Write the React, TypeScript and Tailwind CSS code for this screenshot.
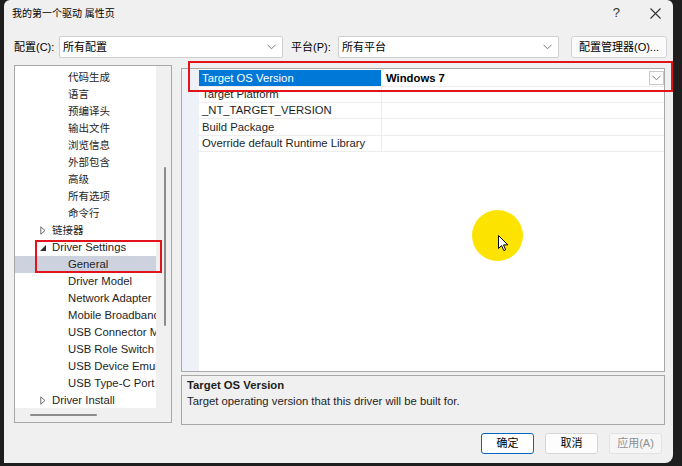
const FONT = { fontFamily: '"Liberation Sans", "Noto Sans CJK SC", sans-serif' };

type TreeItem = { label: string; level: 1 | 2; arrow?: 'closed' | 'open'; selected?: boolean };

const treeItems: TreeItem[] = [
  { label: '代码生成', level: 2 },
  { label: '语言', level: 2 },
  { label: '预编译头', level: 2 },
  { label: '输出文件', level: 2 },
  { label: '浏览信息', level: 2 },
  { label: '外部包含', level: 2 },
  { label: '高级', level: 2 },
  { label: '所有选项', level: 2 },
  { label: '命令行', level: 2 },
  { label: '链接器', level: 1, arrow: 'closed' },
  { label: 'Driver Settings', level: 1, arrow: 'open' },
  { label: 'General', level: 2, selected: true },
  { label: 'Driver Model', level: 2 },
  { label: 'Network Adapter', level: 2 },
  { label: 'Mobile Broadband', level: 2 },
  { label: 'USB Connector Manager', level: 2 },
  { label: 'USB Role Switch Driver', level: 2 },
  { label: 'USB Device Emulation', level: 2 },
  { label: 'USB Type-C Port Controller', level: 2 },
  { label: 'Driver Install', level: 1, arrow: 'closed' },
];

const props = [
  'Target OS Version',
  'Target Platform',
  '_NT_TARGET_VERSION',
  'Build Package',
  'Override default Runtime Library',
];

const isCjk = (s: string) => /[\u4e00-\u9fff]/.test(s);

const Chevron = ({ className = '' }: { className?: string }) => (
  <svg width="9" height="6" viewBox="0 0 9 6" className={className}>
    <path d="M0.5 0.8 L4.5 4.8 L8.5 0.8" fill="none" stroke="#7a7a7a" strokeWidth="1" />
  </svg>
);

const Select = ({ value, width }: { value: string; width: string }) => (
  <div className={`${width} h-[22px] bg-white border border-[#cfcfcf] rounded-[2px] flex items-center pl-[3px] pr-[6px]`}>
    <span className="flex-1 text-[11px] text-black">{value}</span>
    <Chevron />
  </div>
);

const TreeArrow = ({ kind }: { kind: 'closed' | 'open' }) =>
  kind === 'closed' ? (
    <svg width="6" height="9" viewBox="0 0 6 9" className="shrink-0">
      <path d="M0.8 0.8 L5 4.5 L0.8 8.2 Z" fill="none" stroke="#6b6b6b" strokeWidth="1" />
    </svg>
  ) : (
    <svg width="6" height="6" viewBox="0 0 6 6" className="shrink-0">
      <path d="M6 0 L6 6 L0 6 Z" fill="#2e2e2e" />
    </svg>
  );

const Tree = () => (
  <div className="w-[158px] h-[358px] border border-[#a8a8a8] bg-[#f0f0f0] flex flex-col">
    <div className="flex flex-1 min-h-0">
      <div className="w-[141px] bg-white pt-[3px] overflow-hidden">
        {treeItems.map((it) => (
          <div
            key={it.label}
            className={`h-[17px] flex items-center whitespace-nowrap text-[#1e1e1e] ${
              isCjk(it.label) ? 'text-[10.5px]' : 'text-[11.3px]'
            } ${it.selected ? 'bg-[#ccd2de]' : ''}`}
          >
            {it.level === 1 ? (
              <>
                <span className="w-[37px] shrink-0 pl-[25px] flex items-center">
                  {it.arrow && <TreeArrow kind={it.arrow} />}
                </span>
                <span>{it.label}</span>
              </>
            ) : (
              <span className="pl-[53px]">{it.label}</span>
            )}
          </div>
        ))}
      </div>
      <div className="flex-1 flex justify-center pt-[101px] pb-[82px] pl-[2px]">
        <div className="w-[2px] bg-[#8c8c8c] rounded-full" />
      </div>
    </div>
    <div className="h-[14px] flex items-center pl-[15px]">
      <div className="w-[67px] h-[2px] bg-[#8c8c8c] rounded-full" />
    </div>
  </div>
);

const PropGrid = () => {
  const rowH = ['h-[17px]', 'h-[16px]', 'h-[16px]', 'h-[17px]', 'h-[16px]'];
  return (
    <div className="h-[304px] bg-white border border-[#a8a8a8] flex">
      <div className="w-[17px] bg-[#eef2f8]" />
      <div className="flex-1 flex flex-col pt-[1px]">
        {props.map((p, i) => (
          <div key={p} className={`${rowH[i]} flex border-b border-[#ededed]`}>
            <div
              className={`w-[182px] flex items-center pl-[3px] text-[11.3px] whitespace-nowrap ${
                i === 0 ? 'bg-[#0078d7] text-white' : 'text-[#1e1e1e]'
              }`}
            >
              {p}
            </div>
            <div className="flex-1 flex items-center pl-[4px] border-l border-[#ededed]">
              {i === 0 && (
                <>
                  <span className="flex-1 text-[11.3px] font-bold text-black">Windows 7</span>
                  <div className="w-[15px] h-[14px] border border-[#c8c8c8] bg-white flex items-center justify-center">
                    <Chevron />
                  </div>
                </>
              )}
            </div>
          </div>
        ))}
      </div>
    </div>
  );
};

const Button = ({ label, primary, disabled }: { label: string; primary?: boolean; disabled?: boolean }) => (
  <div
    className={`w-[53px] h-[21px] rounded-[3px] flex items-center justify-center text-[11px] border ${
      primary
        ? 'border-[#0067c0] bg-white text-black'
        : disabled
        ? 'border-[#e2e2e2] bg-[#f6f6f6] text-[#8f8f8f]'
        : 'border-[#d6d6d6] bg-[#fdfdfd] text-black'
    }`}
  >
    {label}
  </div>
);

export default function App() {
  return (
    <div className="w-[682px] h-[466px] bg-[#1e1e1e] flex pl-[4px] pr-[9px] pb-[3px]" style={FONT}>
      <div className="flex-1 relative flex flex-col bg-[#f0f0f0] rounded-t-[6px] rounded-br-[8px] overflow-hidden">
        {/* title */}
        <div className="h-[25px] flex items-center pl-[8px] pt-[1px]">
          <span className="flex-1 text-[10px] text-black">我的第一个驱动 属性页</span>
          <span className="text-[13px] text-[#333] mr-[30px]">?</span>
          <svg width="11" height="11" viewBox="0 0 11 11" className="mr-[12px]">
            <path d="M0.5 0.5 L10.5 10.5 M10.5 0.5 L0.5 10.5" stroke="#333" strokeWidth="1.1" />
          </svg>
        </div>

        {/* config row */}
        <div className="mt-[11px] h-[22px] flex items-center pl-[10px]">
          <span className="w-[45px] text-[11px] text-black">配置(C):</span>
          <Select value="所有配置" width="w-[224px]" />
          <span className="w-[47px] ml-[8px] text-[11px] text-black">平台(P):</span>
          <Select value="所有平台" width="w-[221px]" />
          <div className="ml-[12px] w-[96px] h-[22px] bg-[#fbfbfb] border border-[#d3d3d3] rounded-[3px] flex items-center justify-center text-[11px] text-black">
            配置管理器(O)...
          </div>
        </div>

        {/* main */}
        <div className="mt-[7px] flex pl-[10px]">
          <Tree />
          <div className="ml-[9px] w-[484px] flex flex-col pt-[3px]">
            <PropGrid />
            <div className="mt-[3px] h-[50px] border border-[#a8a8a8] bg-[#f0f0f0] pl-[5px] pt-[1px] text-[11.3px] text-[#1e1e1e]">
              <div className="font-bold leading-[16px]">Target OS Version</div>
              <div className="leading-[16px]">Target operating version that this driver will be built for.</div>
            </div>
          </div>
        </div>

        {/* buttons */}
        <div className="mt-[8px] flex justify-end gap-[11px] pr-[11px]">
          <Button label="确定" primary />
          <Button label="取消" />
          <Button label="应用(A)" disabled />
        </div>

        {/* annotations */}
        <div className="absolute left-[184px] top-[61px] w-[485px] h-[31px] border-2 border-[#e3131c]" />
        <div className="absolute left-[31px] top-[240px] w-[127px] h-[33px] border-2 border-[#e3131c]" />
        <div className="absolute left-[468px] top-[210px] w-[51px] h-[51px] rounded-full bg-[#fde400]" />
        <svg className="absolute left-[494px] top-[235px]" width="11" height="17" viewBox="0 0 11 17">
          <path d="M0.5 0.5 L0.5 13.5 L3.6 10.6 L5.8 15.6 L7.6 14.8 L5.5 9.9 L9.8 9.9 Z" fill="white" stroke="black" strokeWidth="1" />
        </svg>
      </div>
    </div>
  );
}
